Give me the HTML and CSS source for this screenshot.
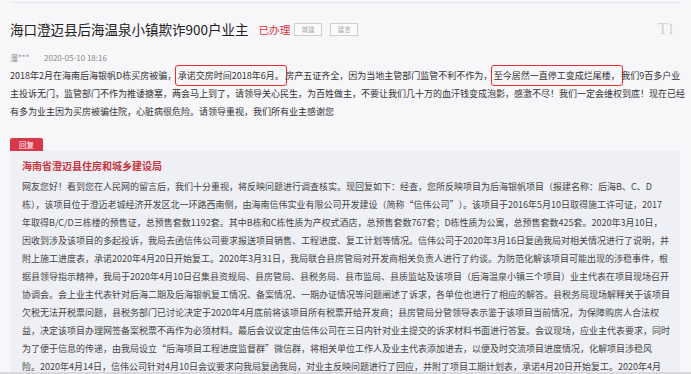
FILE: index.html
```html
<!DOCTYPE html>
<html lang="zh-CN">
<head>
    <meta charset="UTF-8">
    <title>海口澄迈县后海温泉小镇欺诈900户业主</title>
    <link rel="stylesheet" href="styles.css">
</head>
<body>
<div class="page">
    <div class="topline"></div>
    <div class="head">
        <h1 class="title">海口澄迈县后海温泉小镇欺诈900户业主</h1>
        <span class="state">已办理</span>
        <span class="tag">城建</span>
        <span class="tag">建言</span>
        <span class="font-size">T<svg width="4" height="12" viewBox="0 0 4 12"><path d="M2 0.5 L3.6 2.5 H2.5 V9.5 H3.6 L2 11.5 L0.4 9.5 H1.5 V2.5 H0.4 Z" fill="#c8c8c8"/></svg></span>
    </div>
    <div class="meta">
        <span class="user">溜***</span>
        <span class="time">2020-05-10 18:16</span>
    </div>
    <p class="content">2018年2月在海南后海银帆D栋买房被骗，<span class="mark">承诺交房时间2018年6月。</span>房产五证齐全，因为当地主管部门监管不利不作为，<span class="mark">至今居然一直停工变成烂尾楼，</span>我们9百多户业主投诉无门，监管部门不作为推诿搪塞，两会马上到了，请领导关心民生，为百姓做主，不要让我们几十万的血汗钱变成泡影，感激不尽！我们一定会维权到底！现在已经有多为业主因为买房被骗住院，心脏病很危险。请领导重视，我们所有业主感谢您</p>

    <div class="reply-tag">回复</div>
    <div class="reply">
        <div class="org">海南省澄迈县住房和城乡建设局</div>
        <p class="reply-text">网友您好！看到您在人民网的留言后，我们十分重视，将反映问题进行调查核实。现回复如下：经查，您所反映项目为后海银帆项目（报建名称：后海B、C、D栋），该项目位于澄迈老城经济开发区北一环路西南侧，由海南信伟实业有限公司开发建设（简称<span class="ql">“</span>信伟公司<span class="qr">”</span>）。该项目于2016年5月10日取得施工许可证，2017年取得B/C/D三栋楼的预售证，总预售套数1192套。其中B栋和C栋性质为产权式酒店，总预售套数767套；D栋性质为公寓，总预售套数425套。2020年3月10日，因收到涉及该项目的多起投诉，我局去函信伟公司要求报送项目销售、工程进度、复工计划等情况。信伟公司于2020年3月16日复函我局对相关情况进行了说明，并附上施工进度表，承诺2020年4月20日开始复工。2020年3月31日，我局联合县房管局对开发商相关负责人进行了约谈。为防范化解该项目可能出现的涉稳事件，根据县领导指示精神，我局于2020年4月10日召集县资规局、县房管局、县税务局、县市监局、县质监站及该项目（后海温泉小镇三个项目）业主代表在项目现场召开协调会。会上业主代表针对后海二期及后海银帆复工情况、备案情况、一期办证情况等问题阐述了诉求，各单位也进行了相应的解答。县税务局现场解释关于该项目欠税无法开税票问题，县税务部门已讨论决定于2020年4月底前将该项目所有税票开给开发商；县房管局分管领导表示鉴于该项目当前情况，为保障购房人合法权益，决定该项目办理网签备案税票不再作为必须材料。最后会议议定由信伟公司在三日内针对业主提交的诉求材料书面进行答复。会议现场，应业主代表要求，同时为了便于信息的传递，由我局设立<span class="ql">“</span>后海项目工程进度监督群<span class="qr">”</span>微信群，将相关单位工作人及业主代表添加进去，以便及时交流项目进度情况，化解项目涉稳风险。2020年4月14日，信伟公司针对4月10日会议要求向我局复函我局，对业主反映问题进行了回应，并附了项目工期计划表，承诺4月20日开始复工。2020年4月15日，我局再次组织相关单位到项目现场查看复工情况。</p>
    </div>
</div>
<div class="bottom-bar"></div>
</body>
</html>
```

FILE: styles.css
```css
*{
    margin: 0;
    padding: 0;
}
html, body{
    height: 100%;
    overflow: hidden;
}
body{
    background: #f7f6f9;
    font-family: "Noto Sans CJK SC", "Noto Sans", sans-serif;
    color: #333;
}
.page{
    width: 670px;
    margin-left: 10px;
}
.topline{
    margin-top: 2px;
    border-top: 1px solid #e6e5e9;
}
.head{
    display: flex;
    align-items: center;
    padding-top: 15px;
    height: 22px;
}
.title{
    font-size: 13.5px;
    font-weight: 400;
    color: #222;
    line-height: 22px;
}
.state{
    margin-left: 10px;
    font-size: 10.6px;
    color: #d8343c;
}
.tag{
    margin-left: 4px;
    width: 26px;
    height: 11px;
    line-height: 11px;
    border: 1px solid #cfcfcf;
    background: #fbfbfc;
    font-size: 6.5px;
    color: #aaa;
    text-align: center;
}
.tag + .tag{
    margin-left: 8px;
}
.font-size{
    margin-left: auto;
    margin-right: 7px;
    display: flex;
    align-items: center;
    gap: 1px;
    font-family: "Liberation Serif", serif;
    font-size: 17px;
    color: #d2d2d2;
    line-height: 16px;
}
.meta{
    margin-top: 12px;
    font-size: 8px;
    color: #888;
    line-height: 12px;
}
.time{
    margin-left: 13px;
}
.content{
    margin-top: 3px;
    margin-right: -7px;
    font-size: 9px;
    line-height: 18px;
    color: #333;
}
.mark{
    padding: 3px 2px;
    margin: 0 -1.5px;
    border: 1.5px solid #ee2c2c;
    border-radius: 3px;
}
.reply-tag{
    margin-top: 17px;
    width: 33px;
    height: 13px;
    line-height: 13px;
    background: #d8384a;
    border-radius: 2px 2px 0 0;
    color: #fff;
    font-size: 7.5px;
    text-align: center;
}
.reply{
    background: #eef0f5;
    padding: 7px 12px 20px;
}
.org{
    font-size: 10px;
    font-weight: 700;
    color: #c8353e;
    line-height: 16px;
}
.reply-text{
    margin-top: 4px;
    margin-right: -2px;
    font-size: 9px;
    line-height: 18px;
    color: #444;
}
.ql, .qr{
    display: inline-block;
    width: 1em;
}
.ql{
    text-align: right;
}
.qr{
    text-align: left;
}
.bottom-bar{
    position: fixed;
    left: 0;
    right: 0;
    bottom: 0;
    height: 2px;
    background: #d9d9dc;
}
```
